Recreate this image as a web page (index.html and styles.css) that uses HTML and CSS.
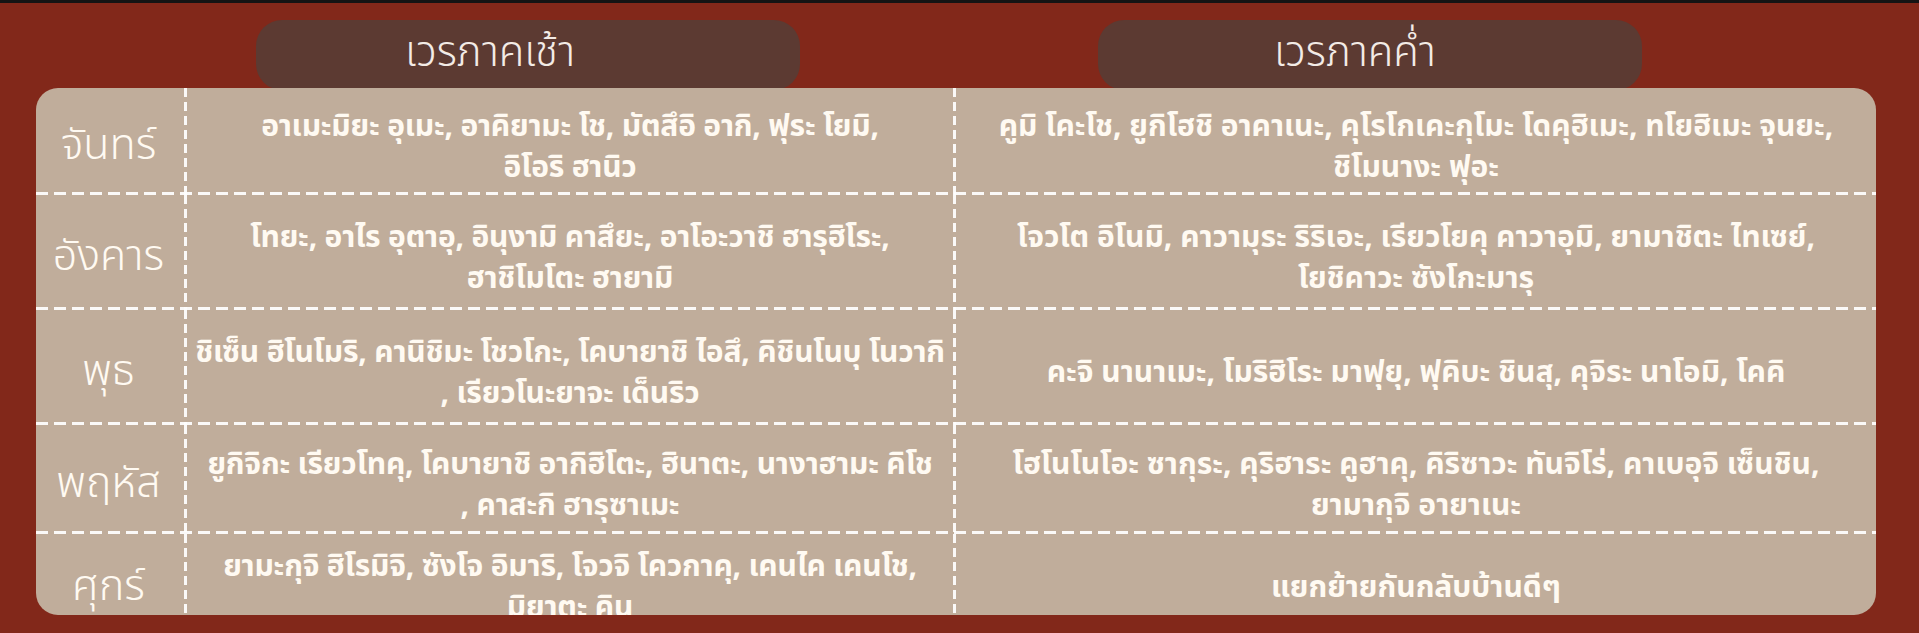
FILE: index.html
```html
<!DOCTYPE html>
<html lang="th">
<head>
<meta charset="utf-8">
<title>เวร</title>
<link rel="stylesheet" href="styles.css">
</head>
<body>
<div class="topbar"></div>
<div class="heads">
  <div class="pill pill-am">เวรภาคเช้า</div>
  <div class="pill pill-pm">เวรภาคค่ำ</div>
</div>
<div class="board">
  <div class="row r1">
    <div class="cell day">จันทร์</div>
    <div class="cell am">อาเมะมิยะ อุเมะ, อาคิยามะ โช, มัตสึอิ อากิ, ฟุระ โยมิ,<br>อิโอริ ฮานิว</div>
    <div class="cell pm">คูมิ โคะโช, ยูกิโฮชิ อาคาเนะ, คุโรโกเคะกุโมะ โดคุฮิเมะ, ทโยฮิเมะ จุนยะ,<br>ชิโมนางะ ฟุอะ</div>
  </div>
  <div class="row r2">
    <div class="cell day">อังคาร</div>
    <div class="cell am">โทยะ, อาไร อุตาอุ, อินุงามิ คาสึยะ, อาโอะวาชิ ฮารุฮิโระ,<br>ฮาชิโมโตะ ฮายามิ</div>
    <div class="cell pm">โจวโต อิโนมิ, คาวามุระ ริริเอะ, เรียวโยคุ คาวาอุมิ, ยามาชิตะ ไทเซย์,<br>โยชิคาวะ ซังโกะมารุ</div>
  </div>
  <div class="row r3">
    <div class="cell day">พุธ</div>
    <div class="cell am">ชิเซ็น ฮิโนโมริ, คานิชิมะ โชวโกะ, โคบายาชิ ไอสึ, คิชินโนบุ โนวากิ<br>, เรียวโนะยาจะ เด็นริว</div>
    <div class="cell pm">คะจิ นานาเมะ, โมริฮิโระ มาฟุยุ, ฟุคิบะ ชินสุ, คุจิระ นาโอมิ, โคคิ</div>
  </div>
  <div class="row r4">
    <div class="cell day">พฤหัส</div>
    <div class="cell am">ยูกิจิกะ เรียวโทคุ, โคบายาชิ อากิฮิโตะ, ฮินาตะ, นางาฮามะ คิโช<br>, คาสะกิ ฮารุซาเมะ</div>
    <div class="cell pm">โฮโนโนโอะ ซากุระ, คุริฮาระ คูฮาคุ, คิริซาวะ ทันจิโร่, คาเบอุจิ เซ็นชิน,<br>ยามากุจิ อายาเนะ</div>
  </div>
  <div class="row r5">
    <div class="cell day">ศุกร์</div>
    <div class="cell am">ยามะกุจิ ฮิโรมิจิ, ซังโจ อิมาริ, โจวจิ โควกาคุ, เคนไค เคนโช,<br>มิยาตะ คิน</div>
    <div class="cell pm">แยกย้ายกันกลับบ้านดีๆ</div>
  </div>
</div>
</body>
</html>
```

FILE: styles.css
```css
html, body {
  margin: 0;
  padding: 0;
  height: 633px;
  overflow: hidden;
  background: #82281a;
  font-family: "Noto Sans", "Noto Sans Thai", sans-serif;
  color: #fffaf2;
}

.topbar {
  height: 3px;
  background: #141414;
}

.heads {
  display: flex;
  gap: 298px;
  padding: 17px 0 0 256px;
}

.pill {
  box-sizing: border-box;
  width: 544px;
  height: 70px;
  margin-bottom: -2px;
  border-radius: 26px;
  background: #5c3a32;
  color: #f3ebe6;
  font-size: 42px;
  font-weight: 300;
  line-height: 60px;
  text-align: center;
}

.pill-am { padding-right: 76px; }
.pill-pm { padding-right: 30px; }

.board {
  position: relative;
  margin: 0 43px 0 36px;
  height: 527px;
  border-radius: 22px;
  overflow: hidden;
  background: #c0ad9b;
}

.row {
  display: grid;
  grid-template-columns: 151px 769px 1fr;
  box-sizing: border-box;
  background: repeating-linear-gradient(90deg, rgba(255, 255, 255, 0.93) 0 12px, transparent 12px 18px) left bottom / 100% 3px no-repeat;
}

.r1 { height: 107px; }
.r2 { height: 115px; }
.r3 { height: 115px; }
.r4 { height: 109px; }
.r5 { height: 96px; background: none; }

.cell {
  box-sizing: border-box;
  display: flex;
  align-items: center;
  justify-content: center;
  text-align: center;
}

.day, .am {
  background: repeating-linear-gradient(180deg, rgba(255, 255, 255, 0.93) 0 9px, transparent 9px 14px) right top / 3px 100% no-repeat;
}

.day {
  font-size: 43px;
  font-weight: 300;
  padding: 8px 6px 0 0;
}

.am, .pm {
  font-size: 30px;
  font-weight: 700;
  line-height: 41px;
  padding: 6px 8px 0;
  white-space: nowrap;
}

.am {
  letter-spacing: -0.2px;
  padding-right: 11px;
}
```
